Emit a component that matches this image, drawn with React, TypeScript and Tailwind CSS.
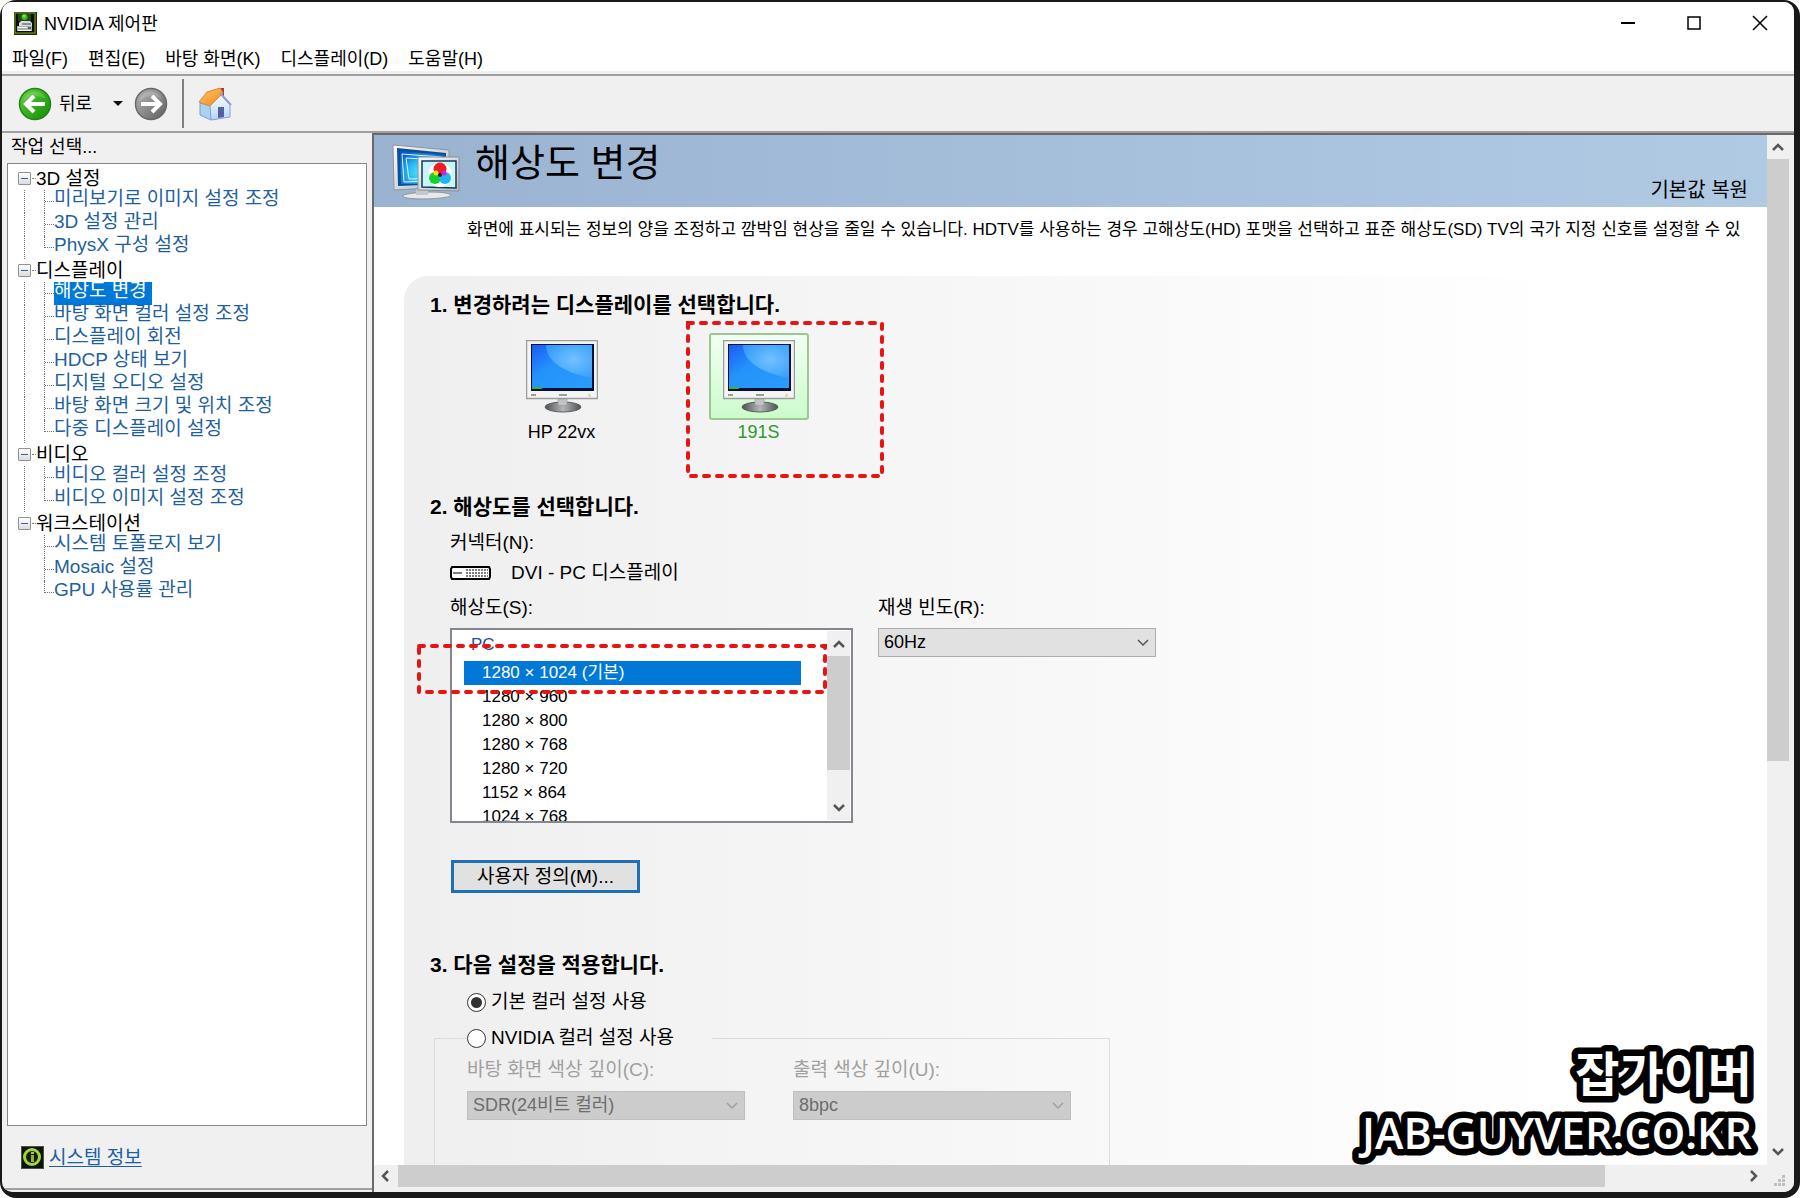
import React, { useState } from "react";

type Group = { title: string; items: string[] };

const GROUPS: Group[] = [
  { title: "3D 설정", items: ["미리보기로 이미지 설정 조정", "3D 설정 관리", "PhysX 구성 설정"] },
  {
    title: "디스플레이",
    items: [
      "해상도 변경",
      "바탕 화면 컬러 설정 조정",
      "디스플레이 회전",
      "HDCP 상태 보기",
      "디지털 오디오 설정",
      "바탕 화면 크기 및 위치 조정",
      "다중 디스플레이 설정",
    ],
  },
  { title: "비디오", items: ["비디오 컬러 설정 조정", "비디오 이미지 설정 조정"] },
  { title: "워크스테이션", items: ["시스템 토폴로지 보기", "Mosaic 설정", "GPU 사용률 관리"] },
];

const MENUS = ["파일(F)", "편집(E)", "바탕 화면(K)", "디스플레이(D)", "도움말(H)"];

const RESOLUTIONS = [
  "1280 × 1024 (기본)",
  "1280 × 960",
  "1280 × 800",
  "1280 × 768",
  "1280 × 720",
  "1152 × 864",
  "1024 × 768",
];

function AppIcon() {
  return (
    <svg width="23" height="23" viewBox="0 0 23 23" aria-hidden="true">
      <rect width="23" height="23" fill="#1c2b08" />
      <rect x="1" y="1" width="20" height="20" fill="#0a0f06" stroke="#7fae2a" />
      <path d="M4 2h13v7H4z" fill="#1f4a10" />
      <circle cx="10.500" cy="5" r="3" fill="#3fb81c" />
      <circle cx="10" cy="4" r="1.500" fill="#7bea4a" />
      <path d="M5 11l2-2h9l2 2v3H5z" fill="#d9dcde" />
      <path d="M8 11h9v2H8z" fill="#8b9094" />
      <path d="M3 14h15v5H3z" fill="#aeb2b4" />
      <path d="M4 15h9v1H4zM4 18h13v1H4z" fill="#f4f4f4" />
      <path d="M14 15h3v2h-3z" fill="#5c6062" />
    </svg>
  );
}

function ArrowBall({ tone, flip }: { tone: "green" | "gray"; flip?: boolean }) {
  const id = "ball-" + tone;
  const green = tone === "green";
  return (
    <svg width="34" height="34" viewBox="0 0 34 34" aria-hidden="true">
      <defs>
        <linearGradient id={id} x1="0" y1="0" x2="1" y2="1">
          <stop offset="0" stopColor={green ? "#6fd04c" : "#b4b4b4"} />
          <stop offset="0.500" stopColor={green ? "#35b01c" : "#8c8c8c"} />
          <stop offset="1" stopColor={green ? "#158a0c" : "#5c5c5c"} />
        </linearGradient>
      </defs>
      <circle cx="17" cy="17" r="15.500" fill={"url(#" + id + ")"} stroke={green ? "#1f8418" : "#686868"} strokeWidth="1.500" />
      <path d="M5 15a12 12 0 0 1 23-3c-7-4-17-4-23 3z" fill="#fff" opacity="0.180" />
      <g transform={flip ? "translate(34 0) scale(-1 1)" : undefined}>
        <path d="M16 9l-8 8 8 8M9 17h18" fill="none" stroke="#fff" strokeWidth="4" strokeLinejoin="miter" />
      </g>
    </svg>
  );
}

function HomeIcon() {
  return (
    <svg width="34" height="34" viewBox="0 0 34 34" aria-hidden="true">
      <defs>
        <linearGradient id="roof" x1="0" y1="0" x2="1" y2="1">
          <stop offset="0" stopColor="#ffc46a" />
          <stop offset="1" stopColor="#f08a1c" />
        </linearGradient>
        <linearGradient id="wall" x1="0" y1="0" x2="0" y2="1">
          <stop offset="0" stopColor="#ffffff" />
          <stop offset="1" stopColor="#b4d4f4" />
        </linearGradient>
      </defs>
      <path d="M21 1h5v9l-5-4z" fill="#b5382a" />
      <path d="M2 16l11 3v14L2 28z" fill="#a9d2f2" stroke="#7a9cd0" />
      <path d="M12 19L22 7l10 11v12l-19 3z" fill="url(#wall)" stroke="#8a9ed6" />
      <path d="M1 15L9 5 22 1l3 5-13 13z" fill="url(#roof)" stroke="#d98a34" />
      <path d="M22 6l11 12" stroke="#8fa0d8" strokeWidth="2" fill="none" />
      <path d="M20 20h6v10l-6 1z" fill="#5560a0" />
    </svg>
  );
}

function HeaderIcon() {
  return (
    <svg width="68" height="56" viewBox="0 0 68 56" aria-hidden="true">
      <defs>
        <radialGradient id="scr" cx="0.550" cy="0.650" r="0.700">
          <stop offset="0" stopColor="#5ff4ff" />
          <stop offset="0.550" stopColor="#27b4f0" />
          <stop offset="1" stopColor="#0a5cc0" />
        </radialGradient>
        <linearGradient id="bez" x1="0" y1="0" x2="1" y2="1">
          <stop offset="0" stopColor="#fafafa" />
          <stop offset="1" stopColor="#b4babf" />
        </linearGradient>
      </defs>
      <path d="M10 52c4-4 44-6 49-1 1 4-46 6-49 1z" fill="#e6e8ea" stroke="#8d9398" />
      <path d="M24 44h12v7H24z" fill="#c4c8cb" />
      <path d="M1 1l56 5v37L2 46z" fill="url(#bez)" stroke="#8c969e" />
      <path d="M5 4l49 5v31L6 42z" fill="#0b4f9c" />
      <path d="M8 7l44 4v28L9 40z" fill="url(#scr)" />
      <path d="M10 10l39 3v23l-37 2zM14 14l32 2v18l-29 1z" fill="none" stroke="#d8f4ff" strokeWidth="1" />
      <path d="M26 13h41v34l-41-1z" fill="url(#bez)" stroke="#8a9096" />
      <path d="M30 17h34v27l-34-1z" fill="#c9f4f8" stroke="#123a5c" strokeWidth="1.500" />
      <circle cx="48" cy="31" r="12" fill="#fff" />
      <circle cx="48" cy="25" r="6.500" fill="#ee1c24" />
      <circle cx="43" cy="34" r="6" fill="#12d22a" />
      <circle cx="53" cy="34" r="6" fill="#1fb4f4" />
      <circle cx="44" cy="29" r="2.500" fill="#f6e21c" />
      <circle cx="52" cy="29" r="2.500" fill="#e41cd0" />
      <circle cx="48" cy="31" r="2" fill="#222" />
    </svg>
  );
}

function MonitorIcon({ id }: { id: string }) {
  return (
    <svg width="72" height="73" viewBox="0 0 72 73" aria-hidden="true">
      <defs>
        <linearGradient id={id} x1="0" y1="0" x2="1" y2="1">
          <stop offset="0" stopColor="#1a5cf4" />
          <stop offset="0.400" stopColor="#2492fb" />
          <stop offset="1" stopColor="#2a9dfa" />
        </linearGradient>
        <linearGradient id={id + "s"} x1="0" y1="0" x2="1" y2="0">
          <stop offset="0" stopColor="#4c5052" />
          <stop offset="0.500" stopColor="#b4b8ba" />
          <stop offset="1" stopColor="#4c5052" />
        </linearGradient>
        <radialGradient id={id + "g"} cx="0.600" cy="0.450" r="0.650">
          <stop offset="0" stopColor="#7cc6ff" />
          <stop offset="1" stopColor="#36a0fc" />
        </radialGradient>
      </defs>
      <rect x="0.500" y="0.500" width="71" height="58" fill="#f4f4f4" stroke="#9a9c9e" strokeWidth="1.500" />
      <rect x="5" y="4" width="63" height="47" fill="#02103a" />
      <rect x="6" y="5" width="60" height="43" fill={"url(#" + id + ")"} />
      <path d="M20 5h46v33C44 34 20 24 20 5z" fill={"url(#" + id + "g)"} opacity="0.900" />
      <rect x="6" y="47" width="10" height="2" fill="#2fb44a" />
      <path d="M5 55h5M33 55h8" stroke="#9a9c9e" strokeWidth="2" />
      <rect x="62" y="54" width="3" height="3" fill="#e4dc9c" />
      <ellipse cx="37" cy="67" rx="18" ry="5" fill={"url(#" + id + "s)"} stroke="#5a5e60" />
      <path d="M32 59h9v6c-3 1-6 1-9 0z" fill="#c0c4c6" stroke="#8a8e90" strokeWidth="0.500" />
    </svg>
  );
}

function DviIcon() {
  return (
    <svg width="41" height="14" viewBox="0 0 41 14" aria-hidden="true">
      <path d="M2 1h37l1 2v8l-1 2H2l-1-2V3z" fill="#fff" stroke="#000" strokeWidth="2" />
      <path d="M3 7h9" stroke="#000" strokeWidth="1" />
      <path d="M16 4h22M16 7h22M16 10h22" stroke="#000" strokeWidth="1" strokeDasharray="2 1" />
    </svg>
  );
}

function InfoIcon() {
  return (
    <svg width="23" height="23" viewBox="0 0 23 23" aria-hidden="true">
      <rect width="23" height="23" fill="#0c1408" />
      <rect x="0.500" y="0.500" width="22" height="22" fill="none" stroke="#4c5248" />
      <circle cx="11" cy="11" r="7.500" fill="#142008" stroke="#a4d43a" strokeWidth="3" />
      <rect x="10" y="6" width="3" height="2" fill="#a9c86a" />
      <rect x="10" y="9" width="3" height="7" fill="#8fb04c" />
    </svg>
  );
}

function Chevron({ dir, color }: { dir: "up" | "down" | "left" | "right"; color: string }) {
  const d = {
    up: "M1 9l5-5 5 5",
    down: "M1 3l5 5 5-5",
    left: "M8 1L3 6l5 5",
    right: "M4 1l5 5-5 5",
  }[dir];
  return (
    <svg width="12" height="12" viewBox="0 0 12 12" aria-hidden="true">
      <path d={d} fill="none" stroke={color} strokeWidth="2.500" />
    </svg>
  );
}

function RedMarker({ width, height }: { width: number; height: number }) {
  return (
    <svg width={width} height={height} viewBox={"0 0 " + width + " " + height} aria-hidden="true">
      <rect
        x="3"
        y="3"
        width={width - 6}
        height={height - 6}
        fill="none"
        stroke="#e81414"
        strokeWidth="4"
        strokeLinecap="round"
        strokeDasharray="5 8"
      />
    </svg>
  );
}

function Combo({ id, value, disabled }: { id: string; value: string; disabled?: boolean }) {
  return (
    <div className="relative w-[278px]">
      <select
        id={id}
        disabled={disabled}
        className="block h-[29px] w-full appearance-none border border-[#adadad] bg-[#e1e1e1] pb-[2px] pl-[5px] text-[18px] leading-6 text-black opacity-100 disabled:border-[#bfbfbf] disabled:bg-[#cccccc] disabled:text-[#6d6d6d]"
      >
        <option>{value}</option>
      </select>
      <span className="pointer-events-none absolute top-0 right-[7px] flex h-full items-center">
        <svg width="12" height="8" viewBox="0 0 12 8" aria-hidden="true">
          <path d="M1 1l5 5 5-5" fill="none" stroke={disabled ? "#a0a0a0" : "#555555"} strokeWidth="1.500" />
        </svg>
      </span>
    </div>
  );
}

function Tree() {
  const [selected, setSelected] = useState("해상도 변경");
  return (
    <ul className="px-[16px] pt-[3px] text-[19px]">
      {GROUPS.map((g, gi) => {
        const last = gi === GROUPS.length - 1;
        return (
          <li key={g.title}>
            <div className="flex h-[23px] items-center">
              <button
                type="button"
                aria-label={g.title + " 접기"}
                className="mx-[-6px] flex size-[13px] shrink-0 items-center justify-center rounded-[1px] border border-[#919191] bg-linear-to-b from-white to-[#dcdcdc]"
              >
                <span className="h-px w-[7px] bg-[#3c5ca8]" />
              </button>
              <span className="ml-[7px] w-[4px] border-t border-dotted border-[#808080]" />
              <span className="leading-[22px] whitespace-nowrap">{g.title}</span>
            </div>
            <ul>
              {g.items.map((item, i) => {
                const lastItem = i === g.items.length - 1;
                return (
                  <li key={item} className="flex h-[23px]">
                    <span className={last ? "w-[20px] shrink-0" : "w-[20px] shrink-0 border-l border-dotted border-[#707070]"} />
                    <span className={lastItem ? "w-[10px] shrink-0" : "w-[10px] shrink-0 border-l border-dotted border-[#707070]"}>
                      <span
                        className={
                          lastItem
                            ? "block h-[12px] border-b border-l border-dotted border-[#707070]"
                            : "block h-[12px] border-b border-dotted border-[#707070]"
                        }
                      />
                    </span>
                    <a
                      href="#"
                      onClick={(e) => {
                        e.preventDefault();
                        setSelected(item);
                      }}
                      className={
                        selected === item
                          ? "block h-[23px] bg-[#0078d7] pr-[5px] leading-[18px] whitespace-nowrap text-white"
                          : "block h-[23px] leading-[18px] whitespace-nowrap text-[#1f5f9f]"
                      }
                    >
                      {item}
                    </a>
                  </li>
                );
              })}
            </ul>
          </li>
        );
      })}
    </ul>
  );
}

function Heading({ children }: { children: React.ReactNode }) {
  return <h2 className="text-[21px] leading-6 font-bold whitespace-nowrap">{children}</h2>;
}

const RADIO =
  "grid size-[19px] shrink-0 appearance-none place-items-center rounded-full border border-[#333333] bg-white before:size-[11px] before:rounded-full checked:before:bg-[#333333]";

export default function App() {
  const [resolution, setResolution] = useState(RESOLUTIONS[0]);
  const [mode, setMode] = useState("default");
  return (
    <div className="h-screen overflow-hidden bg-white font-['Liberation_Sans','Noto_Sans_CJK_KR',sans-serif] font-normal text-black">
      <div className="flex h-full flex-col rounded-[16px] bg-[#191919] pt-[2px] pr-[6px] pb-[6px] pl-[2px]">
        <div className="flex min-h-0 flex-1 flex-col overflow-hidden rounded-[10px] bg-[#f0f0f0]">
          <header className="bg-white">
            <div className="flex h-[42px] items-center pr-[26px] pl-[12px]">
              <AppIcon />
              <h1 className="ml-[7px] flex-1 pt-[2px] text-[18px] leading-6">NVIDIA 제어판</h1>
              <div className="flex gap-[50px]">
                <button type="button" aria-label="최소화">
                  <svg width="16" height="16" viewBox="0 0 16 16"><path d="M1 8h14" stroke="#000" strokeWidth="2" /></svg>
                </button>
                <button type="button" aria-label="최대화">
                  <svg width="16" height="16" viewBox="0 0 16 16"><path d="M2 2h12v12H2z" fill="none" stroke="#000" strokeWidth="1.500" /></svg>
                </button>
                <button type="button" aria-label="닫기">
                  <svg width="16" height="16" viewBox="0 0 16 16"><path d="M1 1l14 14M15 1L1 15" stroke="#000" strokeWidth="1.500" /></svg>
                </button>
              </div>
            </div>
            <nav className="flex h-[27px] items-end gap-[20px] pl-[10px] text-[18px] leading-6">
              {MENUS.map((m) => (
                <button type="button" key={m} className="whitespace-nowrap">
                  {m}
                </button>
              ))}
            </nav>
          </header>

          <div className="mt-[3px] flex h-[59px] items-center border-y-2 border-t-[#a0a0a0] border-b-[#a0a0a0] pl-[16px]">
            <button type="button" className="flex items-center gap-[7px] text-[18px] leading-6">
              <ArrowBall tone="green" />
              뒤로
            </button>
            <button type="button" aria-label="최근 페이지" className="ml-[20px]">
              <svg width="12" height="8" viewBox="0 0 12 8"><path d="M1 1h10L6 6z" fill="#111" /></svg>
            </button>
            <button type="button" aria-label="앞으로" className="ml-[10px]">
              <ArrowBall tone="gray" flip />
            </button>
            <span className="ml-[14px] h-[49px] w-[2px] bg-[#808080]" />
            <button type="button" aria-label="홈" className="ml-[14px]">
              <HomeIcon />
            </button>
          </div>

          <div className="flex min-h-0 flex-1">
            <aside className="mb-[2px] flex w-[370px] shrink-0 flex-col border-b-2 border-[#a0a0a0] pr-[5px] pl-[5px]">
              <div className="h-[30px] pl-[4px] text-[18px] leading-[28px]">작업 선택...</div>
              <div className="min-h-0 flex-1 overflow-hidden border border-[#828790] bg-white">
                <Tree />
              </div>
              <div className="flex h-[62px] items-center gap-[5px] pl-[14px]">
                <InfoIcon />
                <a href="#" className="pt-[2px] text-[19px] leading-6 text-[#1a5fa8] underline underline-offset-2">
                  시스템 정보
                </a>
              </div>
            </aside>

            <main className="flex min-w-0 flex-1 flex-col border-t-2 border-l-2 border-[#696969] bg-[#f0f0f0]">
              <div className="flex min-h-0 flex-1">
                <div className="flex min-w-0 flex-1 flex-col overflow-hidden bg-white">
                  <div className="flex h-[72px] shrink-0 justify-between bg-linear-to-r from-[#9ab3d1] to-[#b1cae4] pr-[19px] pl-[18px]">
                    <div className="flex items-start">
                      <span className="pt-[9px]">
                        <HeaderIcon />
                      </span>
                      <h1 className="ml-[15px] pt-[6px] text-[38px] leading-[44px] whitespace-nowrap">해상도 변경</h1>
                    </div>
                    <button type="button" className="mb-[5px] self-end text-[20px] leading-6 whitespace-nowrap">
                      기본값 복원
                    </button>
                  </div>
                  <p className="h-[69px] shrink-0 pt-[11px] pl-[93px] text-[17px] leading-6 whitespace-nowrap">
                    화면에 표시되는 정보의 양을 조정하고 깜박임 현상을 줄일 수 있습니다. HDTV를 사용하는 경우 고해상도(HD) 포맷을 선택하고 표준 해상도(SD) TV의 국가 지정 신호를 설정할 수 있
                  </p>

                  <div className="ml-[30px] min-h-0 flex-1 overflow-hidden rounded-tl-[24px] bg-linear-to-r from-[#efefef] to-white to-85% pt-[17px] pl-[26px] text-[19px] leading-6">
                    <Heading>1. 변경하려는 디스플레이를 선택합니다.</Heading>
                    <div className="mt-[16px] ml-[33px] flex">
                      <button type="button" className="flex w-[197px] flex-col items-center text-[18px]">
                        <span className="flex h-[87px] items-center">
                          <MonitorIcon id="m1" />
                        </span>
                        HP 22vx
                      </button>
                      <div className="relative">
                        <button type="button" className="flex w-[197px] flex-col items-center text-[18px] text-[#2f9a2f]">
                          <span className="flex h-[87px] w-[100px] items-center justify-center rounded-[3px] border-2 border-[#9cc795] bg-linear-to-b from-[#f2fff2] to-[#ccfbcc]">
                            <MonitorIcon id="m2" />
                          </span>
                          191S
                        </button>
                        <span className="pointer-events-none absolute top-[-13px] left-[25px]">
                          <RedMarker width={200} height={159} />
                        </span>
                      </div>
                    </div>

                    <div className="mt-[51px]">
                      <Heading>2. 해상도를 선택합니다.</Heading>
                    </div>
                    <div className="pl-[20px]">
                      <div className="mt-[12px]">커넥터(N):</div>
                      <div className="mt-[6px] flex items-center gap-[20px]">
                        <DviIcon />
                        <span>DVI - PC 디스플레이</span>
                      </div>
                      <div className="mt-[11px] flex gap-[25px]">
                        <div>
                          <div id="res-label">해상도(S):</div>
                          <div className="relative mt-[8px]">
                            <div className="flex h-[195px] w-[403px] border-2 border-[#828790] bg-white">
                              <div className="flex-1 overflow-hidden pt-[3px] pr-[26px] pl-[12px] text-[17px]">
                                <div className="mb-[4px] h-[24px] pl-[7px] text-[#2b4a9a]">PC</div>
                                <ul role="listbox" aria-labelledby="res-label">
                                  {RESOLUTIONS.map((r) => (
                                    <li
                                      key={r}
                                      role="option"
                                      aria-selected={r === resolution}
                                      onClick={() => setResolution(r)}
                                      className="h-[24px] pl-[18px] leading-6 whitespace-nowrap aria-selected:bg-[#0078d7] aria-selected:text-white"
                                    >
                                      {r}
                                    </li>
                                  ))}
                                </ul>
                              </div>
                              <div className="my-[1px] mr-[1px] flex w-[23px] flex-col bg-[#f0f0f0]">
                                <button type="button" aria-label="위로" className="flex h-[25px] items-center justify-center">
                                  <Chevron dir="up" color="#555555" />
                                </button>
                                <span className="h-[114px] bg-[#cdcdcd]" />
                                <button type="button" aria-label="아래로" className="mt-auto flex h-[25px] items-center justify-center">
                                  <Chevron dir="down" color="#555555" />
                                </button>
                              </div>
                            </div>
                            <span className="pointer-events-none absolute top-[15px] left-[-34px]">
                              <RedMarker width={412} height={52} />
                            </span>
                          </div>
                        </div>
                        <div>
                          <label htmlFor="refresh" className="mb-[8px] block">
                            재생 빈도(R):
                          </label>
                          <Combo id="refresh" value="60Hz" />
                        </div>
                      </div>
                      <button
                        type="button"
                        className="mt-[37px] ml-[1px] h-[33px] w-[189px] border-[3px] border-[#1e6fb5] bg-[#e1e1e1] text-[19px] leading-6"
                      >
                        사용자 정의(M)...
                      </button>
                    </div>

                    <div className="mt-[60px]">
                      <Heading>3. 다음 설정을 적용합니다.</Heading>
                    </div>
                    <label className="mt-[13px] flex items-center gap-[5px] pl-[37px]">
                      <input type="radio" name="mode" className={RADIO} checked={mode === "default"} onChange={() => setMode("default")} />
                      기본 컬러 설정 사용
                    </label>
                    <fieldset className="mt-[12px] ml-[4px] h-[280px] w-[676px] border border-[#dcdcdc]">
                      <legend className="ml-[32px] w-[245px]">
                        <label className="flex items-center gap-[5px]">
                          <input type="radio" name="mode" className={RADIO} checked={mode === "nvidia"} onChange={() => setMode("nvidia")} />
                          NVIDIA 컬러 설정 사용
                        </label>
                      </legend>
                      <div className="flex gap-[48px] pt-[8px] pl-[32px] text-[#a0a0a0]">
                        <div>
                          <label htmlFor="depth" className="mb-[9px] block">
                            바탕 화면 색상 깊이(C):
                          </label>
                          <Combo id="depth" value="SDR(24비트 컬러)" disabled />
                        </div>
                        <div>
                          <label htmlFor="output" className="mb-[9px] block">
                            출력 색상 깊이(U):
                          </label>
                          <Combo id="output" value="8bpc" disabled />
                        </div>
                      </div>
                    </fieldset>
                  </div>
                </div>
                <div className="mr-[5px] flex w-[22px] shrink-0 flex-col">
                  <button type="button" aria-label="위로" className="flex h-[24px] items-center justify-center">
                    <Chevron dir="up" color="#555555" />
                  </button>
                  <span className="h-[602px] max-h-[59%] bg-[#cdcdcd]" />
                  <button type="button" aria-label="아래로" className="mt-auto flex h-[27px] items-center justify-center">
                    <Chevron dir="down" color="#555555" />
                  </button>
                </div>
              </div>
              <div className="mb-[5px] flex h-[22px] shrink-0">
                <button type="button" aria-label="왼쪽" className="flex w-[24px] items-center justify-center">
                  <Chevron dir="left" color="#555555" />
                </button>
                <span className="w-[85%] bg-[#cdcdcd]" />
                <button type="button" aria-label="오른쪽" className="ml-auto flex w-[24px] items-center justify-center">
                  <Chevron dir="right" color="#555555" />
                </button>
                <span className="flex w-[29px] items-end justify-center">
                  <svg width="12" height="12" viewBox="0 0 12 12" aria-hidden="true">
                    <path d="M8 0h3v3H8zM4 4h3v3H4zM8 4h3v3H8zM0 8h3v3H0zM4 8h3v3H4zM8 8h3v3H8z" fill="#bfbfbf" />
                  </svg>
                </span>
              </div>
            </main>
          </div>
        </div>
      </div>

      <svg className="pointer-events-none absolute right-[40px] bottom-[30px]" width="420" height="130" viewBox="0 0 420 130">
        <g fill="#fff" stroke="#000" strokeWidth="13" strokeLinejoin="round" textAnchor="end" className="[paint-order:stroke]">
          <text x="412" y="54" className="font-['Noto_Sans_CJK_KR',sans-serif] text-[48px] font-bold">
            잡가이버
          </text>
          <text x="412" y="111" className="font-['Open_Sans',sans-serif] text-[43px] font-semibold">
            JAB-GUYVER.CO.KR
          </text>
        </g>
      </svg>
    </div>
  );
}
